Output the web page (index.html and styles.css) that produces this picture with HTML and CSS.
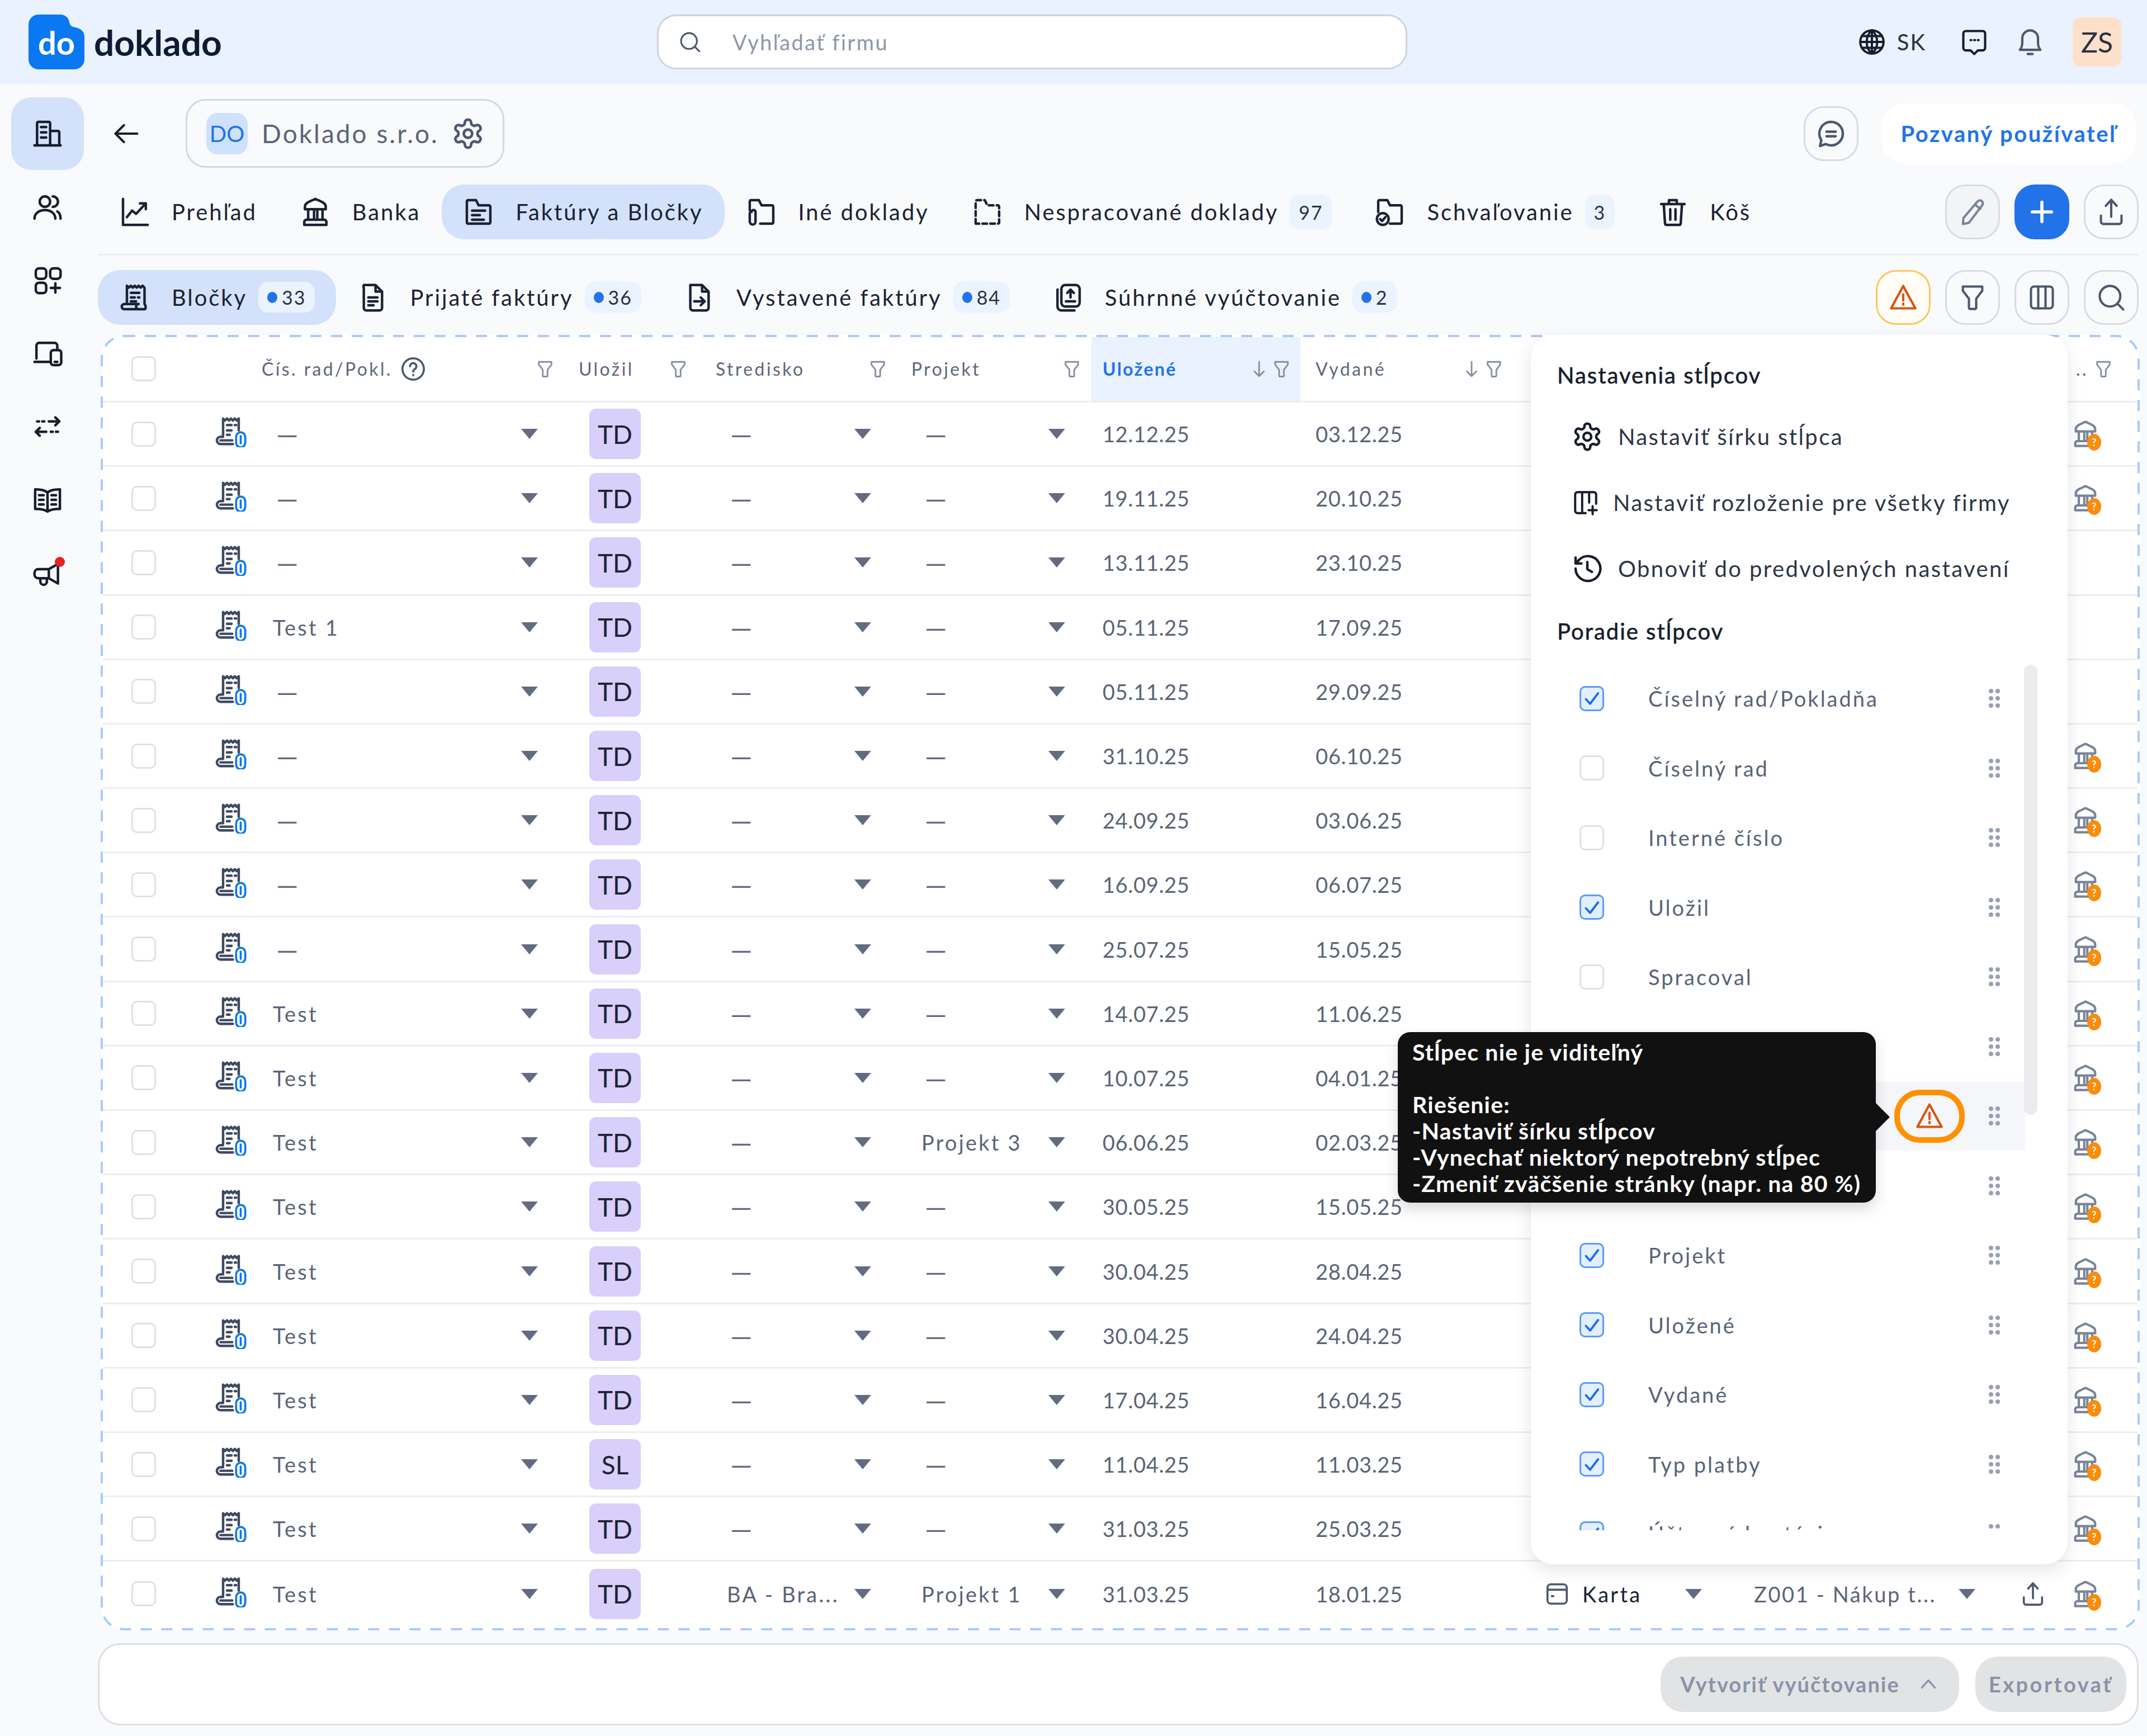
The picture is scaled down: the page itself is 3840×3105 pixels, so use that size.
FILE: index.html
```html
<!DOCTYPE html>
<html lang="sk">
<head>
    <meta charset="UTF-8">
    <meta name="viewport" content="width=device-width, initial-scale=1.0">
    <title>Doklado</title>
    <link rel="stylesheet" href="styles.css">
</head>
<body>
    <svg class="sprite" xmlns="http://www.w3.org/2000/svg">
        <symbol id="building" viewBox="0 0 24 24"><path d="M2 21h20M4 21V4a1 1 0 0 1 1-1h8a1 1 0 0 1 1 1v17M14 10h6a1 1 0 0 1 1 1v10M7 7h4M7 11h4M7 15h4"/></symbol>
        <symbol id="users" viewBox="0 0 24 24"><path d="M10 4a4 4 0 1 0 0 8a4 4 0 0 0 0-8zM2 21c0-4 3.500-6.500 8-6.500s8 2.500 8 6.500M16 4a4 4 0 0 1 0 8M19.500 15.500c1.700 1 2.500 3 2.500 5.500"/></symbol>
        <symbol id="apps" viewBox="0 0 24 24"><rect x="3" y="3" width="8" height="8" rx="2.500"/><rect x="14" y="3" width="8" height="8" rx="2.500"/><rect x="3" y="14" width="8" height="8" rx="2.500"/><path d="M18 14.500v7M14.500 18h7"/></symbol>
        <symbol id="devices" viewBox="0 0 24 24"><path d="M3.500 16V6a2 2 0 0 1 2-2h12a2 2 0 0 1 2 2v3M2 18.500h11"/><rect x="14.500" y="9.500" width="8" height="11.500" rx="2"/><path d="M17.500 18.500h2"/></symbol>
        <symbol id="transfer" viewBox="0 0 24 24"><path d="M4 8h1.500M8 8h1.500M13 8h8M18 5l3 3-3 3M20 16h-1.500M16 16h-1.500M11 16H3M6 13l-3 3 3 3"/></symbol>
        <symbol id="book" viewBox="0 0 24 24"><path d="M12 6.500C10 4.500 7 4 2.500 4v15c4.500 0 7.500.5 9.500 2 2-1.500 5-2 9.500-2V4C17 4 14 4.500 12 6.500zM12 6.500V21M5.500 8.500h3.500M5.500 12h3.500M5.500 15.500h3.500M15 8.500h3.500M15 12h3.500M15 15.500h3.500"/></symbol>
        <symbol id="horn" viewBox="0 0 24 24"><path d="M2 12c0-1.700 1.200-3 3-3h8l7-4v15l-7-4H5c-1.800 0-3-1.300-3-3zM13 9v7M6.500 16v2.500a2.500 2.500 0 0 0 5 0V16"/></symbol>
        <symbol id="back" viewBox="0 0 24 24"><path d="M21 12H3M10 5l-7 7 7 7"/></symbol>
        <symbol id="gear" viewBox="0 0 24 24"><path d="M12.220 2h-.44a2 2 0 0 0-2 2v.18a2 2 0 0 1-1 1.730l-.43.25a2 2 0 0 1-2 0l-.15-.08a2 2 0 0 0-2.730.73l-.22.38a2 2 0 0 0 .73 2.730l.15.1a2 2 0 0 1 1 1.720v.51a2 2 0 0 1-1 1.740l-.15.09a2 2 0 0 0-.73 2.730l.22.38a2 2 0 0 0 2.730.73l.15-.08a2 2 0 0 1 2 0l.43.25a2 2 0 0 1 1 1.730V20a2 2 0 0 0 2 2h.44a2 2 0 0 0 2-2v-.18a2 2 0 0 1 1-1.730l.43-.25a2 2 0 0 1 2 0l.15.08a2 2 0 0 0 2.730-.73l.22-.39a2 2 0 0 0-.73-2.730l-.15-.08a2 2 0 0 1-1-1.740v-.5a2 2 0 0 1 1-1.740l.15-.09a2 2 0 0 0 .73-2.730l-.22-.38a2 2 0 0 0-2.730-.73l-.15.08a2 2 0 0 1-2 0l-.43-.25a2 2 0 0 1-1-1.730V4a2 2 0 0 0-2-2z"/><circle cx="12" cy="12" r="3"/></symbol>
        <symbol id="chart" viewBox="0 0 24 24"><path d="M3 2v20h19M6 16l4-5 3 2.500L20 6M16 5.500h4.500V10"/></symbol>
        <symbol id="bank" viewBox="0 0 24 24"><path d="M4 10V8c0-3 4-4 8-6 4 2 8 3 8 6v2zM6.500 10v8M11 10v8M13.500 10v8M17.500 10v8M5 18h14M3.500 22v-2a2 2 0 0 1 1.500-2M20.500 22v-2a2 2 0 0 0-1.500-2M3.500 22h17"/></symbol>
        <symbol id="folder-doc" viewBox="0 0 24 24"><path d="M3 20V4a1 1 0 0 1 1-1h6l2 4h8a1 1 0 0 1 1 1v12a1 1 0 0 1-1 1H4a1 1 0 0 1-1-1zM7 11h10M7 14.500h6M7 18h9"/></symbol>
        <symbol id="folder-clip" viewBox="0 0 24 24"><path d="M3 11V4a1 1 0 0 1 1-1h6l2 4h8a1 1 0 0 1 1 1v12a1 1 0 0 1-1 1H11M3 13v6.500a2.200 2.200 0 0 0 4.400 0V12a1.500 1.500 0 0 0-3 0"/></symbol>
        <symbol id="folder-dash" viewBox="0 0 24 24"><path stroke-dasharray="3.500 2.500" d="M3 21V4a1 1 0 0 1 1-1h6l2 4h8a1 1 0 0 1 1 1v12a1 1 0 0 1-1 1z"/></symbol>
        <symbol id="folder-check" viewBox="0 0 24 24"><path d="M3 12V4a1 1 0 0 1 1-1h6l2 4h8a1 1 0 0 1 1 1v12a1 1 0 0 1-1 1h-8"/><circle cx="6.500" cy="17.500" r="4.500"/><path d="M4.500 17.500l1.500 1.500 2.500-3"/></symbol>
        <symbol id="trash" viewBox="0 0 24 24"><path d="M3 6h18M9 5V3h6v2M5 6l1 15a1 1 0 0 0 1 1h10a1 1 0 0 0 1-1l1-15M10 10v8M14 10v8"/></symbol>
        <symbol id="pencil" viewBox="0 0 24 24"><path d="M16 3.500a2.500 2.500 0 0 1 4 3L9 21l-5 1 .5-5zM14 6l4.500 3.500"/></symbol>
        <symbol id="plus" viewBox="0 0 24 24"><path d="M12 4v16M4 12h16"/></symbol>
        <symbol id="upload" viewBox="0 0 24 24"><path d="M12 16V2M7.500 7L12 2l4.500 5M3.500 15v5a2 2 0 0 0 2 2h13a2 2 0 0 0 2-2v-5"/></symbol>
        <symbol id="warn" viewBox="0 0 24 24"><path d="M12 2.500L22 21H2zM12 9.500v5M12 17v1"/></symbol>
        <symbol id="funnel" viewBox="0 0 24 24"><path d="M4 3h16v3.500l-5 6.500v7.500a1 1 0 0 1-1 1h-4a1 1 0 0 1-1-1V13L4 6.500z"/></symbol>
        <symbol id="columns" viewBox="0 0 24 24"><rect x="3" y="3" width="18" height="18" rx="2.500"/><path d="M9 3v18M15 3v18"/></symbol>
        <symbol id="search" viewBox="0 0 24 24"><circle cx="11" cy="11" r="8.500"/><path d="M17.500 17.500L22 22"/></symbol>
        <symbol id="receipt" viewBox="0 0 24 24"><path d="M6 17V3l1.500 1.500L9 3l1.500 1.500L12 3l1.500 1.500L15 3l1.500 1.500L18 3l1.500 1.500V17a4 4 0 0 1 .5 4H4a2 2 0 0 1-2-2c0-1 1-2 2-2h11a2 2 0 0 0 0 4M9 8.500h6.500M9 12h3M14.500 12h1M9 15h4"/></symbol>
        <symbol id="receipt-clip" viewBox="0 0 24 24"><path d="M6 15V2l1.500 1.500L9 2l1.500 1.500L12 2l1.500 1.500L15 2l1.500 1.500L18 2v9M6 16H4a2.500 2.500 0 0 0 0 5.500h9.500M4 18.700h9M9 7h3.500M15 7h1M9 11h3.500M9 14.500h2"/><path class="clip" d="M16 16a3.500 3.500 0 0 1 7 0v4.500a3.500 3.500 0 0 1-7 0v-3.500M19.500 15.500V21"/></symbol>
        <symbol id="doc" viewBox="0 0 24 24"><path d="M5 2.500h9l5 5V20a2 2 0 0 1-2 2H7a2 2 0 0 1-2-2V4.500a2 2 0 0 1 0-2zM14 2.500v5h5M8.500 12h7M8.500 15h7M8.500 18h4"/></symbol>
        <symbol id="doc-arrow" viewBox="0 0 24 24"><path d="M5 2.500h9l5 5V20a2 2 0 0 1-2 2H7a2 2 0 0 1-2-2zM14 2.500v5h5M8 15h8M13 12l3 3-3 3"/></symbol>
        <symbol id="doc-stack" viewBox="0 0 24 24"><rect x="7" y="2.500" width="14" height="16.500" rx="3"/><path d="M4 6v13a3 3 0 0 0 3 3h10M14 6v6M11.500 8.500L14 6l2.500 2.500M10.500 15h7"/></symbol>
        <symbol id="globe" viewBox="0 0 24 24"><circle cx="12" cy="12" r="10"/><path d="M2 12h20M3.500 7h17M3.500 17h17M12 2c-6 5-6 15 0 20M12 2c6 5 6 15 0 20M12 2v20"/></symbol>
        <symbol id="chat-dots" viewBox="0 0 24 24"><path d="M5 3h14a2 2 0 0 1 2 2v12a2 2 0 0 1-2 2h-4l-3 3-3-3H5a2 2 0 0 1-2-2V5a2 2 0 0 1 2-2zM9 10.500h.6M12 10.500h.6M15 10.500h.6"/></symbol>
        <symbol id="bell" viewBox="0 0 24 24"><path d="M3.500 18.500c1.500-1.500 2-3 2-6V9a6.500 6.500 0 0 1 13 0v3.500c0 3 .5 4.500 2 6zM10 22h4"/></symbol>
        <symbol id="chat-lines" viewBox="0 0 24 24"><path d="M12 3a9 9 0 0 1 0 18c-1.500 0-3-.4-4-1l-4.500 1.500L4.500 17A9 9 0 0 1 12 3zM8.500 10.500h7M8.500 14h7"/></symbol>
        <symbol id="help" viewBox="0 0 24 24"><circle cx="12" cy="12" r="10"/><path d="M9 9.500a3 3 0 1 1 4.500 2.600c-1 .6-1.500 1.200-1.500 2.400M12 17.500v.5"/></symbol>
        <symbol id="sort" viewBox="0 0 24 24"><path d="M12 3v18M6 15l6 6 6-6"/></symbol>
        <symbol id="card" viewBox="0 0 24 24"><rect x="3" y="3" width="18" height="18" rx="3"/><path d="M3 8h18M7 14h1.500"/></symbol>
        <symbol id="layout-add" viewBox="0 0 24 24"><path d="M12 21H5a2 2 0 0 1-2-2V5a2 2 0 0 1 2-2h14a2 2 0 0 1 2 2v8M9 3v18M15 3v9M18 15v7M14.500 18.500h7"/></symbol>
        <symbol id="history" viewBox="0 0 24 24"><path d="M3 12a9.500 9.500 0 1 0 3-7l-3 3M3 3.500V8h4.500M12 7v5.500l3.500 2"/></symbol>
        <symbol id="check" viewBox="0 0 24 24"><path d="M5 13l5 5.500L19.500 6"/></symbol>
        <symbol id="chevron" viewBox="0 0 24 24"><path d="M5 16l7-8 7 8"/></symbol>
        <symbol id="dots" viewBox="0 0 22 36"><g class="dot-fill"><circle cx="5" cy="5" r="4"/><circle cx="17" cy="5" r="4"/><circle cx="5" cy="18" r="4"/><circle cx="17" cy="18" r="4"/><circle cx="5" cy="31" r="4"/><circle cx="17" cy="31" r="4"/></g></symbol>
    </svg>

    <header class="topbar">
        <div class="brand">
            <div class="brand-mark">do</div>
            <span class="brand-name">doklado</span>
        </div>
        <div class="search-box">
            <svg class="ic ic-40 slate"><use href="#search"/></svg>
            <span>Vyhľadať firmu</span>
        </div>
        <div class="top-right">
            <svg class="ic ic-50 ink"><use href="#globe"/></svg>
            <span class="lang">SK</span>
            <svg class="ic ic-52 ink top-chat"><use href="#chat-dots"/></svg>
            <svg class="ic ic-52 slate top-bell"><use href="#bell"/></svg>
            <div class="avatar">ZS</div>
        </div>
    </header>

    <div class="layout">
        <nav class="sidebar">
            <a class="side-item active"><svg class="ic ic-56"><use href="#building"/></svg></a>
            <a class="side-item"><svg class="ic ic-56"><use href="#users"/></svg></a>
            <a class="side-item"><svg class="ic ic-56"><use href="#apps"/></svg></a>
            <a class="side-item"><svg class="ic ic-56"><use href="#devices"/></svg></a>
            <a class="side-item"><svg class="ic ic-56"><use href="#transfer"/></svg></a>
            <a class="side-item"><svg class="ic ic-56"><use href="#book"/></svg></a>
            <a class="side-item horn"><svg class="ic ic-56"><use href="#horn"/></svg><i class="red-dot"></i></a>
        </nav>

        <main class="content">
            <div class="company-row">
                <svg class="ic ic-52 ink back"><use href="#back"/></svg>
                <div class="company">
                    <span class="company-badge">DO</span>
                    <span class="company-name">Doklado s.r.o.</span>
                    <svg class="ic ic-60 slate"><use href="#gear"/></svg>
                </div>
                <button class="round-btn chat-btn"><svg class="ic ic-56 slate"><use href="#chat-lines"/></svg></button>
                <div class="invited">Pozvaný používateľ</div>
            </div>

            <div class="tabs-row">
                <a class="tab"><svg class="ic ic-56"><use href="#chart"/></svg><span>Prehľad</span></a>
                <a class="tab"><svg class="ic ic-56"><use href="#bank"/></svg><span>Banka</span></a>
                <a class="tab active"><svg class="ic ic-56"><use href="#folder-doc"/></svg><span>Faktúry a Bločky</span></a>
                <a class="tab"><svg class="ic ic-56"><use href="#folder-clip"/></svg><span>Iné doklady</span></a>
                <a class="tab"><svg class="ic ic-56"><use href="#folder-dash"/></svg><span>Nespracované doklady</span><b class="count tall">97</b></a>
                <a class="tab"><svg class="ic ic-56"><use href="#folder-check"/></svg><span>Schvaľovanie</span><b class="count tall">3</b></a>
                <a class="tab"><svg class="ic ic-56"><use href="#trash"/></svg><span>Kôš</span></a>
                <div class="tools">
                    <button class="round-btn muted"><svg class="ic ic-52 slate-light"><use href="#pencil"/></svg></button>
                    <button class="round-btn primary"><svg class="ic ic-52 white thick"><use href="#plus"/></svg></button>
                    <button class="round-btn"><svg class="ic ic-52 slate"><use href="#upload"/></svg></button>
                </div>
            </div>

            <div class="divider"></div>

            <div class="tabs-row">
                <a class="tab active"><svg class="ic ic-56"><use href="#receipt"/></svg><span>Bločky</span><b class="count"><i></i>33</b></a>
                <a class="tab"><svg class="ic ic-56"><use href="#doc"/></svg><span>Prijaté faktúry</span><b class="count"><i></i>36</b></a>
                <a class="tab"><svg class="ic ic-56"><use href="#doc-arrow"/></svg><span>Vystavené faktúry</span><b class="count"><i></i>84</b></a>
                <a class="tab"><svg class="ic ic-56"><use href="#doc-stack"/></svg><span>Súhrnné vyúčtovanie</span><b class="count"><i></i>2</b></a>
                <div class="tools">
                    <button class="round-btn warn"><svg class="ic ic-52 orange"><use href="#warn"/></svg></button>
                    <button class="round-btn"><svg class="ic ic-52 slate"><use href="#funnel"/></svg></button>
                    <button class="round-btn"><svg class="ic ic-52 slate"><use href="#columns"/></svg></button>
                    <button class="round-btn"><svg class="ic ic-52 slate"><use href="#search"/></svg></button>
                </div>
            </div>

            <section class="table-wrap">
                <svg class="dash-frame" xmlns="http://www.w3.org/2000/svg"><rect class="dash-rect" x="2" y="2" rx="40"/></svg>

                <div class="head">
                    <div class="h-check"><span class="chk"></span></div>
                    <div class="h-cell first"><span>Čís. rad/Pokl.</span><svg class="ic ic-46 slate"><use href="#help"/></svg><svg class="ic ic-34 filter"><use href="#funnel"/></svg></div>
                    <div class="h-cell c-saved"><span>Uložil</span><svg class="ic ic-34 filter"><use href="#funnel"/></svg></div>
                    <div class="h-cell c-center"><span>Stredisko</span><svg class="ic ic-34 filter"><use href="#funnel"/></svg></div>
                    <div class="h-cell c-project"><span>Projekt</span><svg class="ic ic-34 filter"><use href="#funnel"/></svg></div>
                    <div class="h-cell c-stored sorted"><span>Uložené</span><svg class="ic ic-34 filter"><use href="#sort"/></svg><svg class="ic ic-34 filter next"><use href="#funnel"/></svg></div>
                    <div class="h-cell c-issued"><span>Vydané</span><svg class="ic ic-34 filter"><use href="#sort"/></svg><svg class="ic ic-34 filter next"><use href="#funnel"/></svg></div>
                    <div class="h-cell c-last"><span>..</span><svg class="ic ic-34 filter"><use href="#funnel"/></svg></div>
                </div>

                <div class="row"><div class="c-chk"><span class="chk"></span></div><div class="c-ico"><svg class="ic ic-56 doc-ico"><use href="#receipt-clip"/></svg></div><div class="c-sel"><span class="dash">—</span><i class="caret"></i></div><div class="c-user"><span class="user">TD</span></div><div class="c-sel c-st"><span class="dash">—</span><i class="caret"></i></div><div class="c-sel c-pr"><span class="dash">—</span><i class="caret"></i></div><div class="c-date first">12.12.25</div><div class="c-date second">03.12.25</div><div class="c-rest"><span class="bank-q"><svg class="ic ic-52 slate-light"><use href="#bank"/></svg><b>?</b></span></div></div>
                <div class="row"><div class="c-chk"><span class="chk"></span></div><div class="c-ico"><svg class="ic ic-56 doc-ico"><use href="#receipt-clip"/></svg></div><div class="c-sel"><span class="dash">—</span><i class="caret"></i></div><div class="c-user"><span class="user">TD</span></div><div class="c-sel c-st"><span class="dash">—</span><i class="caret"></i></div><div class="c-sel c-pr"><span class="dash">—</span><i class="caret"></i></div><div class="c-date first">19.11.25</div><div class="c-date second">20.10.25</div><div class="c-rest"><span class="bank-q"><svg class="ic ic-52 slate-light"><use href="#bank"/></svg><b>?</b></span></div></div>
                <div class="row"><div class="c-chk"><span class="chk"></span></div><div class="c-ico"><svg class="ic ic-56 doc-ico"><use href="#receipt-clip"/></svg></div><div class="c-sel"><span class="dash">—</span><i class="caret"></i></div><div class="c-user"><span class="user">TD</span></div><div class="c-sel c-st"><span class="dash">—</span><i class="caret"></i></div><div class="c-sel c-pr"><span class="dash">—</span><i class="caret"></i></div><div class="c-date first">13.11.25</div><div class="c-date second">23.10.25</div><div class="c-rest"></div></div>
                <div class="row"><div class="c-chk"><span class="chk"></span></div><div class="c-ico"><svg class="ic ic-56 doc-ico"><use href="#receipt-clip"/></svg></div><div class="c-sel"><span>Test 1</span><i class="caret"></i></div><div class="c-user"><span class="user">TD</span></div><div class="c-sel c-st"><span class="dash">—</span><i class="caret"></i></div><div class="c-sel c-pr"><span class="dash">—</span><i class="caret"></i></div><div class="c-date first">05.11.25</div><div class="c-date second">17.09.25</div><div class="c-rest"></div></div>
                <div class="row"><div class="c-chk"><span class="chk"></span></div><div class="c-ico"><svg class="ic ic-56 doc-ico"><use href="#receipt-clip"/></svg></div><div class="c-sel"><span class="dash">—</span><i class="caret"></i></div><div class="c-user"><span class="user">TD</span></div><div class="c-sel c-st"><span class="dash">—</span><i class="caret"></i></div><div class="c-sel c-pr"><span class="dash">—</span><i class="caret"></i></div><div class="c-date first">05.11.25</div><div class="c-date second">29.09.25</div><div class="c-rest"></div></div>
                <div class="row"><div class="c-chk"><span class="chk"></span></div><div class="c-ico"><svg class="ic ic-56 doc-ico"><use href="#receipt-clip"/></svg></div><div class="c-sel"><span class="dash">—</span><i class="caret"></i></div><div class="c-user"><span class="user">TD</span></div><div class="c-sel c-st"><span class="dash">—</span><i class="caret"></i></div><div class="c-sel c-pr"><span class="dash">—</span><i class="caret"></i></div><div class="c-date first">31.10.25</div><div class="c-date second">06.10.25</div><div class="c-rest"><span class="bank-q"><svg class="ic ic-52 slate-light"><use href="#bank"/></svg><b>?</b></span></div></div>
                <div class="row"><div class="c-chk"><span class="chk"></span></div><div class="c-ico"><svg class="ic ic-56 doc-ico"><use href="#receipt-clip"/></svg></div><div class="c-sel"><span class="dash">—</span><i class="caret"></i></div><div class="c-user"><span class="user">TD</span></div><div class="c-sel c-st"><span class="dash">—</span><i class="caret"></i></div><div class="c-sel c-pr"><span class="dash">—</span><i class="caret"></i></div><div class="c-date first">24.09.25</div><div class="c-date second">03.06.25</div><div class="c-rest"><span class="bank-q"><svg class="ic ic-52 slate-light"><use href="#bank"/></svg><b>?</b></span></div></div>
                <div class="row"><div class="c-chk"><span class="chk"></span></div><div class="c-ico"><svg class="ic ic-56 doc-ico"><use href="#receipt-clip"/></svg></div><div class="c-sel"><span class="dash">—</span><i class="caret"></i></div><div class="c-user"><span class="user">TD</span></div><div class="c-sel c-st"><span class="dash">—</span><i class="caret"></i></div><div class="c-sel c-pr"><span class="dash">—</span><i class="caret"></i></div><div class="c-date first">16.09.25</div><div class="c-date second">06.07.25</div><div class="c-rest"><span class="bank-q"><svg class="ic ic-52 slate-light"><use href="#bank"/></svg><b>?</b></span></div></div>
                <div class="row"><div class="c-chk"><span class="chk"></span></div><div class="c-ico"><svg class="ic ic-56 doc-ico"><use href="#receipt-clip"/></svg></div><div class="c-sel"><span class="dash">—</span><i class="caret"></i></div><div class="c-user"><span class="user">TD</span></div><div class="c-sel c-st"><span class="dash">—</span><i class="caret"></i></div><div class="c-sel c-pr"><span class="dash">—</span><i class="caret"></i></div><div class="c-date first">25.07.25</div><div class="c-date second">15.05.25</div><div class="c-rest"><span class="bank-q"><svg class="ic ic-52 slate-light"><use href="#bank"/></svg><b>?</b></span></div></div>
                <div class="row"><div class="c-chk"><span class="chk"></span></div><div class="c-ico"><svg class="ic ic-56 doc-ico"><use href="#receipt-clip"/></svg></div><div class="c-sel"><span>Test</span><i class="caret"></i></div><div class="c-user"><span class="user">TD</span></div><div class="c-sel c-st"><span class="dash">—</span><i class="caret"></i></div><div class="c-sel c-pr"><span class="dash">—</span><i class="caret"></i></div><div class="c-date first">14.07.25</div><div class="c-date second">11.06.25</div><div class="c-rest"><span class="bank-q"><svg class="ic ic-52 slate-light"><use href="#bank"/></svg><b>?</b></span></div></div>
                <div class="row"><div class="c-chk"><span class="chk"></span></div><div class="c-ico"><svg class="ic ic-56 doc-ico"><use href="#receipt-clip"/></svg></div><div class="c-sel"><span>Test</span><i class="caret"></i></div><div class="c-user"><span class="user">TD</span></div><div class="c-sel c-st"><span class="dash">—</span><i class="caret"></i></div><div class="c-sel c-pr"><span class="dash">—</span><i class="caret"></i></div><div class="c-date first">10.07.25</div><div class="c-date second">04.01.25</div><div class="c-rest"><span class="bank-q"><svg class="ic ic-52 slate-light"><use href="#bank"/></svg><b>?</b></span></div></div>
                <div class="row"><div class="c-chk"><span class="chk"></span></div><div class="c-ico"><svg class="ic ic-56 doc-ico"><use href="#receipt-clip"/></svg></div><div class="c-sel"><span>Test</span><i class="caret"></i></div><div class="c-user"><span class="user">TD</span></div><div class="c-sel c-st"><span class="dash">—</span><i class="caret"></i></div><div class="c-sel c-pr"><span>Projekt 3</span><i class="caret"></i></div><div class="c-date first">06.06.25</div><div class="c-date second">02.03.25</div><div class="c-rest"><span class="bank-q"><svg class="ic ic-52 slate-light"><use href="#bank"/></svg><b>?</b></span></div></div>
                <div class="row"><div class="c-chk"><span class="chk"></span></div><div class="c-ico"><svg class="ic ic-56 doc-ico"><use href="#receipt-clip"/></svg></div><div class="c-sel"><span>Test</span><i class="caret"></i></div><div class="c-user"><span class="user">TD</span></div><div class="c-sel c-st"><span class="dash">—</span><i class="caret"></i></div><div class="c-sel c-pr"><span class="dash">—</span><i class="caret"></i></div><div class="c-date first">30.05.25</div><div class="c-date second">15.05.25</div><div class="c-rest"><span class="bank-q"><svg class="ic ic-52 slate-light"><use href="#bank"/></svg><b>?</b></span></div></div>
                <div class="row"><div class="c-chk"><span class="chk"></span></div><div class="c-ico"><svg class="ic ic-56 doc-ico"><use href="#receipt-clip"/></svg></div><div class="c-sel"><span>Test</span><i class="caret"></i></div><div class="c-user"><span class="user">TD</span></div><div class="c-sel c-st"><span class="dash">—</span><i class="caret"></i></div><div class="c-sel c-pr"><span class="dash">—</span><i class="caret"></i></div><div class="c-date first">30.04.25</div><div class="c-date second">28.04.25</div><div class="c-rest"><span class="bank-q"><svg class="ic ic-52 slate-light"><use href="#bank"/></svg><b>?</b></span></div></div>
                <div class="row"><div class="c-chk"><span class="chk"></span></div><div class="c-ico"><svg class="ic ic-56 doc-ico"><use href="#receipt-clip"/></svg></div><div class="c-sel"><span>Test</span><i class="caret"></i></div><div class="c-user"><span class="user">TD</span></div><div class="c-sel c-st"><span class="dash">—</span><i class="caret"></i></div><div class="c-sel c-pr"><span class="dash">—</span><i class="caret"></i></div><div class="c-date first">30.04.25</div><div class="c-date second">24.04.25</div><div class="c-rest"><span class="bank-q"><svg class="ic ic-52 slate-light"><use href="#bank"/></svg><b>?</b></span></div></div>
                <div class="row"><div class="c-chk"><span class="chk"></span></div><div class="c-ico"><svg class="ic ic-56 doc-ico"><use href="#receipt-clip"/></svg></div><div class="c-sel"><span>Test</span><i class="caret"></i></div><div class="c-user"><span class="user">TD</span></div><div class="c-sel c-st"><span class="dash">—</span><i class="caret"></i></div><div class="c-sel c-pr"><span class="dash">—</span><i class="caret"></i></div><div class="c-date first">17.04.25</div><div class="c-date second">16.04.25</div><div class="c-rest"><span class="bank-q"><svg class="ic ic-52 slate-light"><use href="#bank"/></svg><b>?</b></span></div></div>
                <div class="row"><div class="c-chk"><span class="chk"></span></div><div class="c-ico"><svg class="ic ic-56 doc-ico"><use href="#receipt-clip"/></svg></div><div class="c-sel"><span>Test</span><i class="caret"></i></div><div class="c-user"><span class="user">SL</span></div><div class="c-sel c-st"><span class="dash">—</span><i class="caret"></i></div><div class="c-sel c-pr"><span class="dash">—</span><i class="caret"></i></div><div class="c-date first">11.04.25</div><div class="c-date second">11.03.25</div><div class="c-rest"><span class="bank-q"><svg class="ic ic-52 slate-light"><use href="#bank"/></svg><b>?</b></span></div></div>
                <div class="row"><div class="c-chk"><span class="chk"></span></div><div class="c-ico"><svg class="ic ic-56 doc-ico"><use href="#receipt-clip"/></svg></div><div class="c-sel"><span>Test</span><i class="caret"></i></div><div class="c-user"><span class="user">TD</span></div><div class="c-sel c-st"><span class="dash">—</span><i class="caret"></i></div><div class="c-sel c-pr"><span class="dash">—</span><i class="caret"></i></div><div class="c-date first">31.03.25</div><div class="c-date second">25.03.25</div><div class="c-rest"><span class="bank-q"><svg class="ic ic-52 slate-light"><use href="#bank"/></svg><b>?</b></span></div></div>
                <div class="row last"><div class="c-chk"><span class="chk"></span></div><div class="c-ico"><svg class="ic ic-56 doc-ico"><use href="#receipt-clip"/></svg></div><div class="c-sel"><span>Test</span><i class="caret"></i></div><div class="c-user"><span class="user">TD</span></div><div class="c-sel c-st"><span>BA - Bra...</span><i class="caret"></i></div><div class="c-sel c-pr"><span>Projekt 1</span><i class="caret"></i></div><div class="c-date first">31.03.25</div><div class="c-date second">18.01.25</div><div class="c-rest"><div class="pay"><svg class="ic ic-46 slate"><use href="#card"/></svg><span>Karta</span><i class="caret"></i></div><div class="code"><span>Z001 - Nákup t...</span><i class="caret"></i></div><svg class="ic ic-46 slate up"><use href="#upload"/></svg><span class="bank-q"><svg class="ic ic-52 slate-light"><use href="#bank"/></svg><b>?</b></span></div></div>

                <aside class="col-panel">
                    <h3>Nastavenia stĺpcov</h3>
                    <a class="menu-item"><svg class="ic ic-56 ink"><use href="#gear"/></svg><span>Nastaviť šírku stĺpca</span></a>
                    <a class="menu-item tight"><svg class="ic ic-50 ink"><use href="#layout-add"/></svg><span>Nastaviť rozloženie pre všetky firmy</span></a>
                    <a class="menu-item"><svg class="ic ic-56 ink"><use href="#history"/></svg><span>Obnoviť do predvolených nastavení</span></a>
                    <h3 class="second">Poradie stĺpcov</h3>
                    <div class="col-list">
                        <i class="scrollbar"></i>
                        <div class="col-row"><span class="chk on"><svg class="ic"><use href="#check"/></svg></span><span class="col-name">Číselný rad/Pokladňa</span><svg class="drag"><use href="#dots"/></svg></div>
                        <div class="col-row"><span class="chk"></span><span class="col-name">Číselný rad</span><svg class="drag"><use href="#dots"/></svg></div>
                        <div class="col-row"><span class="chk"></span><span class="col-name">Interné číslo</span><svg class="drag"><use href="#dots"/></svg></div>
                        <div class="col-row"><span class="chk on"><svg class="ic"><use href="#check"/></svg></span><span class="col-name">Uložil</span><svg class="drag"><use href="#dots"/></svg></div>
                        <div class="col-row"><span class="chk"></span><span class="col-name">Spracoval</span><svg class="drag"><use href="#dots"/></svg></div>
                        <div class="col-row"><span class="col-name"></span><svg class="drag"><use href="#dots"/></svg></div>
                        <div class="col-row hot"><span class="col-name"></span><span class="ring"><svg class="ic ic-52 orange"><use href="#warn"/></svg></span><svg class="drag"><use href="#dots"/></svg></div>
                        <div class="col-row"><span class="col-name"></span><svg class="drag"><use href="#dots"/></svg></div>
                        <div class="col-row"><span class="chk on"><svg class="ic"><use href="#check"/></svg></span><span class="col-name">Projekt</span><svg class="drag"><use href="#dots"/></svg></div>
                        <div class="col-row"><span class="chk on"><svg class="ic"><use href="#check"/></svg></span><span class="col-name">Uložené</span><svg class="drag"><use href="#dots"/></svg></div>
                        <div class="col-row"><span class="chk on"><svg class="ic"><use href="#check"/></svg></span><span class="col-name">Vydané</span><svg class="drag"><use href="#dots"/></svg></div>
                        <div class="col-row"><span class="chk on"><svg class="ic"><use href="#check"/></svg></span><span class="col-name">Typ platby</span><svg class="drag"><use href="#dots"/></svg></div>
                        <div class="col-row"><span class="chk on"><svg class="ic"><use href="#check"/></svg></span><span class="col-name">Účtovná kontácia</span><svg class="drag"><use href="#dots"/></svg></div>
                    </div>
                </aside>

                <div class="tooltip">
                    <div>Stĺpec nie je viditeľný</div>
                    <div class="gap">Riešenie:</div>
                    <div>-Nastaviť šírku stĺpcov</div>
                    <div>-Vynechať niektorý nepotrebný stĺpec</div>
                    <div>-Zmeniť zväčšenie stránky (napr. na 80 %)</div>
                </div>
            </section>

            <footer class="bottom-bar">
                <button class="grey-btn create">Vytvoriť vyúčtovanie<svg class="ic ic-40"><use href="#chevron"/></svg></button>
                <button class="grey-btn export">Exportovať</button>
            </footer>
        </main>
    </div>
</body>
</html>
```

FILE: styles.css
```css
* {
    box-sizing: border-box;
}

html, body {
    margin: 0;
    height: 100%;
}

body {
    display: flex;
    flex-direction: column;
    background-color: #f9fafc;
    font-family: "Lato", "Noto Sans", sans-serif;
    font-size: 40px;
    letter-spacing: 3px;
    color: #1a2233;
}

button {
    font-family: inherit;
    letter-spacing: inherit;
}

.sprite {
    display: none;
}

/* icons */
.ic {
    flex: none;
    fill: none;
    stroke: currentColor;
    stroke-width: 1.9;
    stroke-linecap: round;
    stroke-linejoin: round;
}

.ic-34 { width: 34px; height: 34px; }
.ic-40 { width: 40px; height: 40px; }
.ic-46 { width: 46px; height: 46px; }
.ic-50 { width: 50px; height: 50px; }
.ic-52 { width: 52px; height: 52px; }
.ic-56 { width: 56px; height: 56px; }
.ic-60 { width: 60px; height: 60px; }

.ink { color: #161d2c; }
.slate { color: #4d576d; }
.slate-light { color: #7b8497; }
.white { color: #fff; }
.orange { color: #d9540f; }
.thick { stroke-width: 2.6; }

/* top bar */
.topbar {
    flex: none;
    display: flex;
    align-items: center;
    height: 150px;
    padding: 0 46px 0 51px;
    background-color: #e9f2fe;
}

.brand {
    display: flex;
    align-items: center;
    gap: 17px;
    width: 1124px;
}

.brand-mark {
    display: flex;
    align-items: center;
    justify-content: center;
    width: 100px;
    height: 98px;
    background-color: #0a78f0;
    clip-path: path("M18 0H56C66 0 72 6 73 14C74 20 78 22 84 23C94 25 100 31 100 40V80C100 90 92 98 82 98H18C8 98 0 90 0 80V18C0 8 8 0 18 0Z");
    font-size: 58px;
    font-weight: 700;
    letter-spacing: 0;
    color: #fff;
}

.brand-name {
    font-size: 64px;
    font-weight: 700;
    letter-spacing: 0;
    color: #0d1b33;
}

.search-box {
    display: flex;
    align-items: center;
    gap: 56px;
    width: 1342px;
    height: 98px;
    padding-left: 36px;
    background-color: #fff;
    border: 3px solid #ced3dc;
    border-radius: 34px;
    font-size: 38px;
    letter-spacing: 2.4px;
    color: #8d96a9;
}

.top-right {
    display: flex;
    align-items: center;
    margin-left: auto;
}

.lang {
    margin-left: 20px;
    font-size: 40px;
    letter-spacing: 2px;
    color: #2a3242;
}

.top-chat {
    margin-left: 60px;
}

.top-bell {
    margin-left: 48px;
}

.avatar {
    display: flex;
    align-items: center;
    justify-content: center;
    width: 87px;
    height: 88px;
    margin-left: 50px;
    background-color: #fde0c9;
    border-radius: 14px;
    font-size: 50px;
    letter-spacing: 0;
    color: #2a3242;
}

/* sidebar */
.layout {
    flex: 1;
    display: flex;
    min-height: 0;
}

.sidebar {
    flex: none;
    display: flex;
    flex-direction: column;
    width: 175px;
    padding: 24px 25px 0 20px;
}

.side-item {
    position: relative;
    display: flex;
    align-items: center;
    justify-content: center;
    height: 130px;
    margin-bottom: 1px;
    color: #161d2c;
    border-radius: 36px;
}

.side-item.active {
    background-color: #d3e2fa;
}

.red-dot {
    position: absolute;
    top: 36px;
    left: 78px;
    width: 18px;
    height: 18px;
    background-color: #e3241b;
    border-radius: 50%;
}

/* content */
.content {
    flex: 1;
    min-width: 0;
    display: flex;
    flex-direction: column;
    padding: 27px 13px 19px 0;
}

.company-row {
    display: flex;
    align-items: center;
    height: 123px;
    margin-bottom: 30px;
}

.back {
    margin-left: 25px;
}

.company {
    display: flex;
    align-items: center;
    width: 570px;
    height: 123px;
    margin-left: 80px;
    padding-left: 34px;
    border: 3px solid #d5d8de;
    border-radius: 36px;
}

.company-badge {
    display: flex;
    align-items: center;
    justify-content: center;
    width: 74px;
    height: 74px;
    background-color: #cfe2fb;
    border-radius: 20px;
    font-size: 40px;
    letter-spacing: 0;
    color: #2272ea;
}

.company-name {
    margin: 0 22px 0 25px;
    font-size: 46px;
    letter-spacing: 3px;
    color: #5b6478;
}

.round-btn {
    display: flex;
    align-items: center;
    justify-content: center;
    width: 98px;
    height: 98px;
    padding: 0;
    background-color: transparent;
    border: 3px solid #d8dbe0;
    border-radius: 36px;
}

.chat-btn {
    margin-left: auto;
}

.invited {
    display: flex;
    align-items: center;
    justify-content: center;
    width: 455px;
    height: 107px;
    margin: 0 7px 0 41px;
    background-color: #fff;
    border-radius: 40px;
    font-weight: 700;
    letter-spacing: 2.5px;
    color: #2272ea;
}

.tabs-row {
    display: flex;
    align-items: center;
    height: 98px;
    padding-right: 2px;
}

.tab {
    display: flex;
    align-items: center;
    height: 98px;
    padding: 0 38px;
    border-radius: 40px;
    letter-spacing: 2.9px;
    white-space: nowrap;
}

.tab > span {
    margin-left: 38px;
}

.tab.active {
    background-color: #d3e2fa;
}

.count {
    display: flex;
    align-items: center;
    gap: 8px;
    height: 55px;
    margin-left: 20px;
    padding: 0 16px;
    background-color: #eaf3fe;
    border-radius: 18px;
    font-size: 34px;
    font-weight: 400;
    letter-spacing: 2px;
    color: #2a3242;
}

.count.tall {
    height: 62px;
}

.count i {
    width: 18px;
    height: 20px;
    background-color: #2272ea;
    border-radius: 50%;
}

.tools {
    display: flex;
    gap: 26px;
    margin-left: auto;
}

.round-btn.muted { background-color: #f3f4f6; }
.round-btn.primary { background-color: #2272ea; border-color: #2272ea; }
.round-btn.warn { background-color: #fffdf6; border-color: #fcc762; }

.divider {
    height: 3px;
    margin: 26px 2px 26px 0;
    background-color: #eceef1;
}

/* table */
.table-wrap {
    position: relative;
    flex: none;
    width: 3647px;
    height: 2317px;
    margin: 18px 0 0 5px;
    padding: 4px 4px 6px;
    background-color: #fff;
    border-radius: 40px;
}

.dash-frame {
    position: absolute;
    top: 0;
    left: 0;
    width: 100%;
    height: 100%;
    pointer-events: none;
}

.dash-rect {
    width: calc(100% - 4px);
    height: calc(100% - 4px);
    fill: none;
    stroke: #a9cbfb;
    stroke-width: 4;
    stroke-dasharray: 20 17;
}

.head {
    display: grid;
    grid-template-columns: 284px 532px 230px 360px 362px 374px 412px 1fr;
    height: 117px;
    border-bottom: 3px solid #eceef1;
    font-size: 32px;
    letter-spacing: 3.4px;
    color: #5d667a;
}

.h-check {
    display: flex;
    align-items: center;
    padding-left: 51px;
}

.h-cell {
    display: flex;
    align-items: center;
    justify-content: space-between;
}

.h-cell .filter {
    color: #858ea2;
    stroke-width: 2;
}

.h-cell .filter.next {
    margin-left: 6px;
}

.h-cell.first { padding-right: 8px; }
.h-cell.first span { margin-right: 14px; }
.h-cell.first .filter { margin-left: auto; }
.c-saved { padding: 0 0 0 35px; }
.c-center { padding: 0 3px 0 50px; }
.c-project { padding: 0 18px 0 40px; }
.c-issued { padding: 0 49px 0 27px; }
.c-last { padding: 0 44px 0 975px; }

.c-stored {
    padding: 0 17px 0 20px;
}

.c-stored.sorted {
    background-color: #e9f2fe;
}

.c-stored.sorted span {
    font-weight: 700;
    letter-spacing: 2.4px;
    color: #2272ea;
}

.h-cell.sorted span,
.c-issued span {
    margin-right: auto;
}

.row {
    display: grid;
    grid-template-columns: 201px 103px 512px 200px 390px 362px 374px 412px 1fr;
    align-items: center;
    height: 115.2px;
    border-bottom: 3px solid #eceef1;
    font-size: 38px;
    letter-spacing: 3.2px;
    color: #5a6478;
}

.row.last {
    border-bottom: none;
}

.c-chk {
    padding-left: 51px;
}

.chk {
    display: flex;
    align-items: center;
    justify-content: center;
    width: 44px;
    height: 45px;
    border: 3px solid #dfe1e6;
    border-radius: 10px;
    background-color: #fff;
    flex: none;
}

.chk.on {
    background-color: #e3eefe;
    border-color: #5b9bf5;
    color: #1f6fe8;
}

.chk.on .ic {
    width: 36px;
    height: 36px;
    stroke-width: 2.6;
}

.doc-ico {
    color: #3f4a62;
}

.clip {
    stroke: #0a78f0;
    stroke-width: 1.6;
}

.c-sel {
    display: flex;
    align-items: center;
    justify-content: space-between;
    padding-right: 38px;
}

.c-st { padding-left: 100px; padding-right: 32px; }
.c-pr { padding-left: 58px; padding-right: 47px; }

.dash {
    margin-left: 6px;
    font-size: 50px;
    line-height: 1;
    letter-spacing: 0;
    color: #626b80;
}

.caret {
    flex: none;
    width: 0;
    height: 0;
    border-left: 15px solid transparent;
    border-right: 15px solid transparent;
    border-top: 18px solid #626b80;
}

.c-user {
    display: flex;
    justify-content: center;
}

.user {
    display: flex;
    align-items: center;
    justify-content: center;
    width: 92px;
    height: 90px;
    background-color: #d8cffa;
    border-radius: 12px;
    font-size: 46px;
    letter-spacing: 0;
    color: #1d2433;
}

.c-date {
    letter-spacing: 0.7px;
}

.c-date.first { padding-left: 20px; }
.c-date.second { padding-left: 27px; }

.c-rest {
    display: grid;
    grid-template-columns: 332px 485px 135px 1fr;
    align-items: center;
}

.bank-q {
    grid-column: 4;
    position: relative;
    width: 52px;
    height: 52px;
    margin-left: 14px;
}

.bank-q b {
    position: absolute;
    right: -2px;
    bottom: -4px;
    display: flex;
    align-items: center;
    justify-content: center;
    width: 25px;
    height: 30px;
    background-color: #f98c0a;
    border-radius: 50%;
    font-size: 18px;
    letter-spacing: 0;
    color: #fff;
}

.pay {
    display: flex;
    align-items: center;
    padding: 0 24px;
    color: #1a2233;
}

.pay span {
    margin-left: 22px;
}

.pay .caret {
    margin-left: auto;
    margin-right: 2px;
}

.code {
    display: flex;
    align-items: center;
    justify-content: space-between;
    padding: 0 22px 0 67px;
    letter-spacing: 2.6px;
}

.up {
    margin-left: 58px;
}

/* column settings panel */
.col-panel {
    position: absolute;
    top: 0;
    left: 2558px;
    width: 960px;
    height: 2199px;
    padding-top: 42px;
    background-color: #fff;
    border-radius: 40px;
    box-shadow: 0 10px 30px rgba(30, 40, 70, 0.12);
    overflow: hidden;
}

.col-panel h3 {
    margin: 0;
    height: 60px;
    padding-left: 47px;
    font-size: 40px;
    font-weight: 400;
    line-height: 60px;
    letter-spacing: 2px;
    -webkit-text-stroke: 0.6px #161d2c;
    color: #161d2c;
}

.col-panel h3.second {
    margin-top: 23px;
}

.menu-item {
    display: flex;
    align-items: center;
    height: 118px;
    padding-left: 73px;
    letter-spacing: 2.4px;
    color: #2d3546;
}

.menu-item span {
    margin-left: 27px;
}

.menu-item:first-of-type {
    margin-top: 21px;
}

.menu-item.tight span {
    margin-left: 24px;
}

.col-list {
    position: relative;
    height: 1550px;
    margin-top: 28px;
    padding-right: 76px;
    overflow: hidden;
}

.scrollbar {
    position: absolute;
    top: 2px;
    right: 54px;
    width: 24px;
    height: 805px;
    background-color: #ececef;
    border-radius: 12px;
}

.col-row {
    display: flex;
    align-items: center;
    height: 124.5px;
    padding: 0 44px 0 87px;
    font-size: 38px;
    letter-spacing: 3px;
    color: #596377;
}

.col-row.hot {
    background-color: #f4f6f9;
}

.col-name {
    flex: 1;
    margin-left: 79px;
}

.drag {
    flex: none;
    width: 22px;
    height: 36px;
}

.dot-fill {
    fill: #98a1b3;
}

.ring {
    display: flex;
    align-items: center;
    justify-content: center;
    width: 126px;
    height: 95px;
    margin-right: 42px;
    border: 10px solid #ff9000;
    border-radius: 46px;
}

/* tooltip */
.tooltip {
    position: absolute;
    top: 1247px;
    left: 2320px;
    width: 855px;
    height: 305px;
    padding: 12px 0 0 26px;
    background-color: #111;
    border-radius: 22px;
    box-shadow: 0 12px 24px rgba(0, 0, 0, 0.14);
    font-size: 41px;
    font-weight: 700;
    line-height: 47px;
    letter-spacing: 1.2px;
    color: #fff;
}

.tooltip .gap {
    margin-top: 47px;
}

.tooltip::after {
    content: "";
    position: absolute;
    top: 127px;
    right: -25px;
    border-top: 25px solid transparent;
    border-bottom: 25px solid transparent;
    border-left: 25px solid #111;
}

/* bottom bar */
.bottom-bar {
    display: flex;
    align-items: center;
    justify-content: flex-end;
    gap: 29px;
    height: 148px;
    margin: 23px 2px 0 0;
    padding-right: 19px;
    background-color: #fff;
    border: 3px solid #dcdee5;
    border-radius: 40px;
}

.grey-btn {
    display: flex;
    align-items: center;
    height: 99px;
    background-color: #e2e3e5;
    border: none;
    border-radius: 40px;
    font-size: 38px;
    font-weight: 700;
    letter-spacing: 2px;
    color: #8a93a8;
}

.grey-btn.create {
    gap: 31px;
    padding: 0 35px;
}

.grey-btn.export {
    padding: 0 24px;
    letter-spacing: 3.5px;
}
```
